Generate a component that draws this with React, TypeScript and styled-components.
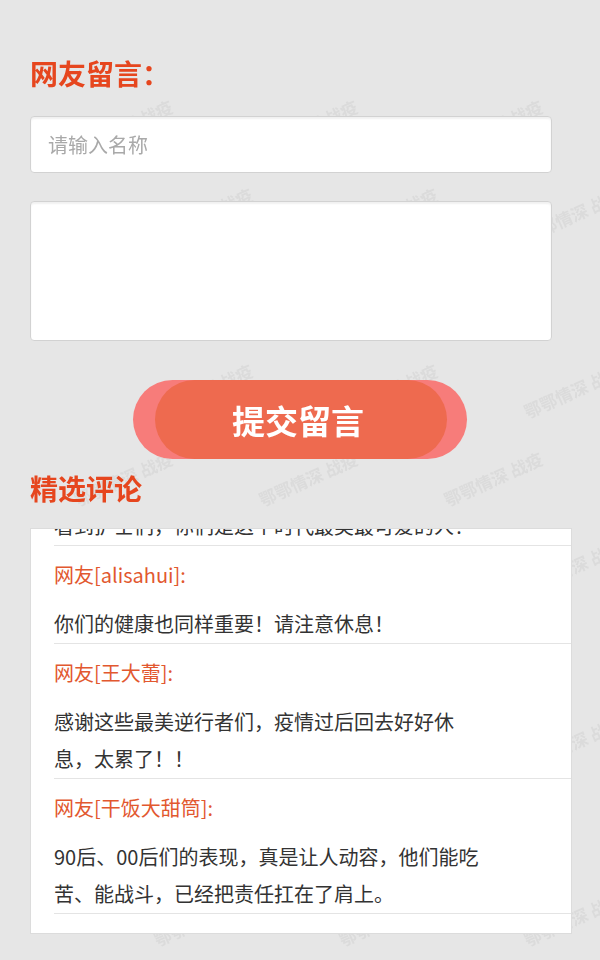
import React, { useLayoutEffect, useRef } from "react";
import styled, { createGlobalStyle } from "styled-components";

const GlobalStyle = createGlobalStyle`
  html, body {
    margin: 0;
    padding: 0;
    background: #e6e6e6;
  }
  body {
    font-family: "Noto Sans CJK SC", "Noto Sans", "Liberation Sans", sans-serif;
  }
  * {
    box-sizing: border-box;
  }
`;

interface Comment {
  name: string;
  text: string;
}

const comments: Comment[] = [
  {
    name: "白衣天使",
    text: "看到护士们，你们是这个时代最美最可爱的人！",
  },
  { name: "alisahui", text: "你们的健康也同样重要！请注意休息！" },
  {
    name: "王大蕾",
    text: "感谢这些最美逆行者们，疫情过后回去好好休息，太累了！！",
  },
  {
    name: "干饭大甜筒",
    text: "90后、00后们的表现，真是让人动容，他们能吃苦、能战斗，已经把责任扛在了肩上。",
  },
];

const MARK_COLS = 3;
const MARK_ROWS = 10;

const App = () => {
  const listRef = useRef<HTMLDivElement>(null);

  useLayoutEffect(() => {
    if (listRef.current) {
      listRef.current.scrollTop = listRef.current.scrollHeight;
    }
  }, []);

  return (
    <>
      <GlobalStyle />
      <Watermark aria-hidden>
        {Array.from({ length: MARK_COLS * MARK_ROWS }).map((_, i) => (
          <Mark key={i} $odd={Math.floor(i / MARK_COLS) % 2 === 1}>
            鄂鄂情深 战疫
          </Mark>
        ))}
      </Watermark>
      <Page>
        <SectionTitle>网友留言：</SectionTitle>
        <NameInput placeholder="请输入名称" />
        <MessageArea />
        <SubmitRow>
          <SubmitButton type="button">
            <span>提交留言</span>
          </SubmitButton>
        </SubmitRow>
        <SectionTitle $compact>精选评论</SectionTitle>
        <CommentBox ref={listRef}>
          {comments.map((c) => (
            <CommentItem key={c.name}>
              <CommentName>网友[{c.name}]:</CommentName>
              <CommentText>{c.text}</CommentText>
            </CommentItem>
          ))}
        </CommentBox>
      </Page>
    </>
  );
};

const Watermark = styled.div`
  position: fixed;
  inset: 0;
  z-index: 0;
  pointer-events: none;
  display: grid;
  grid-template-columns: repeat(${MARK_COLS}, 185px);
  grid-auto-rows: 88px;
  padding: 82px 0 0 30px;
  overflow: hidden;
`;

const Mark = styled.div<{ $odd: boolean }>`
  transform: translateX(${(p) => (p.$odd ? "80px" : "0")}) rotate(-24deg);
  font-size: 17px;
  font-weight: 700;
  color: #dbdbdb;
  white-space: nowrap;
  align-self: center;
  justify-self: center;
`;

const Page = styled.div`
  position: relative;
  z-index: 1;
  padding: 55px 48px 26px 30px;
  display: flex;
  flex-direction: column;
`;

const SectionTitle = styled.h2<{ $compact?: boolean }>`
  margin: 0 0 ${(p) => (p.$compact ? "22px" : "25px")};
  font-size: 28px;
  line-height: 36px;
  font-weight: 700;
  color: #e6461e;
`;

const fieldBase = `
  width: 100%;
  border: 1px solid #d2d2d2;
  border-radius: 4px;
  background: #fff;
  box-shadow: inset 0 2px 2px rgba(0, 0, 0, 0.06);
  outline: none;
  font-family: "Noto Sans CJK SC", "Noto Sans", sans-serif;
  font-size: 20px;
  color: #333;
`;

const NameInput = styled.input`
  ${fieldBase}
  height: 57px;
  padding: 0 17px;

  &::placeholder {
    color: #a9a9a9;
  }
`;

const MessageArea = styled.textarea`
  ${fieldBase}
  margin-top: 28px;
  height: 140px;
  resize: none;
  padding: 12px 17px;
`;

const SubmitRow = styled.div`
  display: flex;
  justify-content: center;
  padding-left: 18px;
  margin: 39px 0 11px;
`;

const SubmitButton = styled.button`
  width: 334px;
  height: 79px;
  border: none;
  border-radius: 40px;
  background: #f77c7a;
  padding: 0 20px 0 22px;
  display: flex;
  cursor: pointer;

  span {
    flex: 1;
    display: flex;
    align-items: center;
    justify-content: center;
    padding-right: 6px;
    border-radius: 40px;
    background: #ee6a4f;
    color: #fff;
    font-family: "Noto Sans CJK SC", "Noto Sans", sans-serif;
    font-size: 33px;
    font-weight: 700;
  }
`;

const CommentBox = styled.div`
  width: 542px;
  height: 406px;
  background: #fff;
  border: 1px solid #dcdcdc;
  overflow-y: scroll;
  padding-bottom: 19px;
  scrollbar-width: none;

  &::-webkit-scrollbar {
    display: none;
  }
`;

const CommentItem = styled.div`
  margin-left: 23px;
  padding: 10px 81px 1px 0;
  border-bottom: 1px solid #e4e4e4;
`;

const CommentName = styled.div`
  font-size: 20px;
  line-height: 38px;
  color: #e2582f;
`;

const CommentText = styled.p`
  margin: 11px 0 0;
  font-size: 20px;
  line-height: 37px;
  color: #333;
`;

export default App;
